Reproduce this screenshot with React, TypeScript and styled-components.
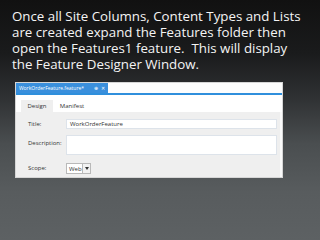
import styled, { createGlobalStyle } from 'styled-components';

const GlobalStyle = createGlobalStyle`
  html, body {
    margin: 0;
    padding: 0;
  }
  body {
    width: 320px;
    height: 240px;
    overflow: hidden;
    font-family: 'Open Sans', 'Noto Sans', sans-serif;
  }
`;

const Slide = styled.div`
  width: 320px;
  height: 240px;
  box-sizing: border-box;
  padding: 8px 0 0 12px;
  background: linear-gradient(180deg, #111111 0%, #1a1b1c 22%, #2e3032 40%, #4a4e50 60%, #585c5e 80%, #5d6163 100%);
  display: flex;
  flex-direction: column;
`;

const Caption = styled.p`
  margin: 0;
  color: #f4f4f4;
  font-size: 13.3px;
  line-height: 16px;
  width: 308px;
  white-space: pre;
`;

const Window = styled.div`
  margin: 10px 0 0 3px;
  width: 268px;
  height: 96px;
  box-sizing: border-box;
  background: #efefef;
  border: 1px solid #d6d6d6;
  display: flex;
  flex-direction: column;
  font-size: 6px;
  color: #333;
`;

const DocBar = styled.div`
  height: 10px;
  background: #fdfdfd;
  border-bottom: 2px solid #2f8fdc;
  display: flex;
`;

const DocTab = styled.div`
  width: 92px;
  background: #3a8fdc;
  color: #fff;
  font-size: 5px;
  display: flex;
  align-items: center;
  padding: 0 3px;
  box-sizing: border-box;
  gap: 3px;
`;

const DocName = styled.span`
  flex: 1;
`;

const DocIcon = styled.span`
  font-size: 5px;
  line-height: 1;
`;

const DesignerTabs = styled.div`
  height: 17px;
  background: #fff;
  display: flex;
  align-items: flex-end;
  padding-left: 5px;
`;

const DesignerTab = styled.div<{ $active?: boolean }>`
  width: 32px;
  height: 12px;
  display: flex;
  align-items: center;
  justify-content: center;
  background: ${(p) => (p.$active ? '#efefef' : 'transparent')};
  margin-right: 3px;
`;

const Panel = styled.div`
  flex: 1;
  display: grid;
  grid-template-columns: 38px 1fr;
  grid-auto-rows: min-content;
  row-gap: 6px;
  padding: 7px 3px 0 12px;
  align-items: center;
  border-right: 2px solid #fafafa;
`;

const Label = styled.div<{ $top?: boolean }>`
  align-self: ${(p) => (p.$top ? 'start' : 'center')};
  padding-top: ${(p) => (p.$top ? '4px' : '0')};
`;

const TextBox = styled.div<{ $h: number }>`
  height: ${(p) => p.$h}px;
  background: #fff;
  border: 1px solid #dde3ea;
  box-sizing: border-box;
  display: flex;
  align-items: center;
  padding-left: 3px;
`;

const Select = styled.div`
  margin-top: 2px;
  width: 25px;
  height: 11px;
  box-sizing: border-box;
  background: #fff;
  border: 1px solid #b9b9b9;
  display: flex;
`;

const SelectText = styled.span`
  flex: 1;
  display: flex;
  align-items: center;
  padding-left: 2px;
`;

const SelectArrow = styled.span`
  width: 7px;
  border-left: 1px solid #b9b9b9;
  background: #f2f2f2;
  display: flex;
  align-items: center;
  justify-content: center;
`;

export default function App() {
  return (
    <>
      <GlobalStyle />
      <Slide>
        <Caption>
          {'Once all Site Columns, Content Types and Lists\nare created expand the Features folder then\nopen the Features1 feature.  This will display\nthe Feature Designer Window.'}
        </Caption>
        <Window>
          <DocBar>
            <DocTab>
              <DocName>WorkOrderFeature.feature*</DocName>
              <DocIcon>⊕</DocIcon>
              <DocIcon>✕</DocIcon>
            </DocTab>
          </DocBar>
          <DesignerTabs>
            <DesignerTab $active>Design</DesignerTab>
            <DesignerTab>Manifest</DesignerTab>
          </DesignerTabs>
          <Panel>
            <Label>Title:</Label>
            <TextBox $h={10}>WorkOrderFeature</TextBox>
            <Label $top>Description:</Label>
            <TextBox $h={20} />
            <Label>Scope:</Label>
            <Select>
              <SelectText>Web</SelectText>
              <SelectArrow>
                <svg width="4" height="3" viewBox="0 0 4 3">
                  <path d="M0 0 L4 0 L2 3 Z" fill="#333" />
                </svg>
              </SelectArrow>
            </Select>
          </Panel>
        </Window>
      </Slide>
    </>
  );
}
